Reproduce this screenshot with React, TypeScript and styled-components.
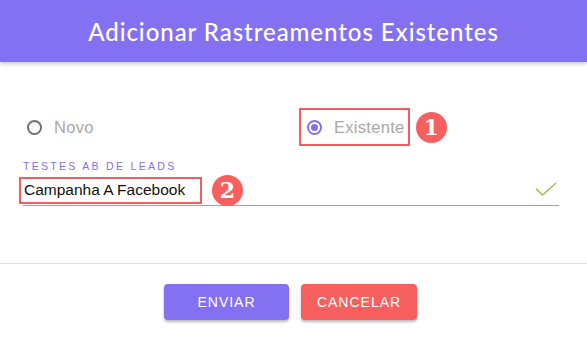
import styled, { createGlobalStyle } from 'styled-components';

const GlobalStyle = createGlobalStyle`
  html, body {
    margin: 0;
    padding: 0;
    background: #fff;
  }
  body {
    font-family: Lato, "Open Sans", sans-serif;
  }
`;

const Dialog = styled.div`
  width: 587px;
  height: 338px;
  background: #fff;
  display: flex;
  flex-direction: column;
  overflow: hidden;
`;

const Header = styled.header`
  height: 62px;
  flex: none;
  background: #8471f1;
  color: #fff;
  display: flex;
  align-items: center;
  justify-content: center;
  font-size: 24px;
  font-weight: 500;
  letter-spacing: 0.95px;
  box-shadow: 0 2px 4px rgba(0, 0, 0, 0.22);
  position: relative;
  z-index: 1;
`;

const Body = styled.div`
  padding: 46px 28px 0 19px;
  height: 155px;
  flex: none;
`;

const RadioRow = styled.div`
  display: grid;
  grid-template-columns: 280px 1fr;
  align-items: center;
  height: 38px;
`;

const RadioCell = styled.div`
  display: flex;
  align-items: center;
  gap: 6px;
`;

const RadioItem = styled.label<{ $marked?: boolean }>`
  display: flex;
  align-items: center;
  gap: 12px;
  height: 38px;
  box-sizing: border-box;
  padding: 0 3px 0 ${(p) => (p.$marked ? 6 : 8)}px;
  border: ${(p) => (p.$marked ? '2px solid #f45d5d' : 'none')};
  font-family: "Liberation Sans", Arial, sans-serif;
  font-size: 16.5px;
  letter-spacing: 0.3px;
  color: #a9a9a9;
`;

const RadioCircle = styled.span<{ $checked?: boolean }>`
  width: 15px;
  height: 15px;
  box-sizing: border-box;
  border-radius: 50%;
  border: 2px solid ${(p) => (p.$checked ? '#8471f1' : '#6f6f6f')};
  display: flex;
  align-items: center;
  justify-content: center;
  &::after {
    content: '';
    width: 7px;
    height: 7px;
    border-radius: 50%;
    background: ${(p) => (p.$checked ? '#8471f1' : 'transparent')};
  }
`;

const Badge = styled.span`
  width: 31px;
  height: 31px;
  border-radius: 50%;
  background: #f86060;
  color: #fff;
  font-family: "DejaVu Serif", serif;
  font-weight: 700;
  font-size: 22px;
  display: flex;
  align-items: center;
  justify-content: center;
  flex: none;
`;

const Field = styled.div`
  margin-top: 14px;
`;

const FieldLabel = styled.div`
  padding-left: 4px;
  font-family: "Liberation Sans", Arial, sans-serif;
  font-size: 10.5px;
  letter-spacing: 2.3px;
  color: #8471f1;
  line-height: 12px;
`;

const InputRow = styled.div`
  display: flex;
  align-items: center;
  height: 28px;
  margin-top: 4px;
`;

const InputValue = styled.div`
  display: flex;
  align-items: center;
  gap: 10px;
`;

const ValueBox = styled.span`
  box-sizing: border-box;
  height: 27px;
  width: 183px;
  padding-left: 3px;
  border: 2px solid #f45d5d;
  display: flex;
  align-items: center;
  font-family: "Liberation Sans", Arial, sans-serif;
  font-size: 15.5px;
  color: #111;
`;

const Underline = styled.div`
  margin-left: 4px;
  margin-top: 1px;
  height: 1px;
  background: #8bc34a;
`;

const Check = styled.svg`
  margin-left: auto;
  margin-right: 2px;
  width: 22px;
  height: 16px;
`;

const Divider = styled.hr`
  margin: 0;
  border: none;
  border-top: 1px solid #e2e2e2;
`;

const Footer = styled.div`
  display: flex;
  justify-content: center;
  gap: 12px;
  padding: 20px 6px 0 0;
`;

const Button = styled.button<{ $tone: 'primary' | 'danger'; $wide?: boolean }>`
  height: 36px;
  width: ${(p) => (p.$wide ? 125 : 116)}px;
  padding: 0;
  border: none;
  border-radius: 4px;
  background: ${(p) => (p.$tone === 'primary' ? '#8471f1' : '#f86060')};
  color: #fff;
  font-family: "Liberation Sans", Arial, sans-serif;
  font-size: 14px;
  letter-spacing: 1px;
  box-shadow: 0 2px 3px rgba(0, 0, 0, 0.28);
`;

export default function App() {
  return (
    <>
      <GlobalStyle />
      <Dialog>
        <Header>Adicionar Rastreamentos Existentes</Header>
        <Body>
          <RadioRow>
            <RadioCell>
              <RadioItem>
                <RadioCircle />
                Novo
              </RadioItem>
            </RadioCell>
            <RadioCell>
              <RadioItem $marked>
                <RadioCircle $checked />
                Existente
              </RadioItem>
              <Badge>1</Badge>
            </RadioCell>
          </RadioRow>
          <Field>
            <FieldLabel>TESTES AB DE LEADS</FieldLabel>
            <InputRow>
              <InputValue>
                <ValueBox>Campanha A Facebook</ValueBox>
                <Badge>2</Badge>
              </InputValue>
              <Check viewBox="0 0 22 16">
                <path d="M1 6.5 L7.5 13 L21 1" fill="none" stroke="#8bc34a" strokeWidth="1.3" />
              </Check>
            </InputRow>
            <Underline />
          </Field>
        </Body>
        <Divider />
        <Footer>
          <Button $tone="primary" $wide>ENVIAR</Button>
          <Button $tone="danger">CANCELAR</Button>
        </Footer>
      </Dialog>
    </>
  );
}
